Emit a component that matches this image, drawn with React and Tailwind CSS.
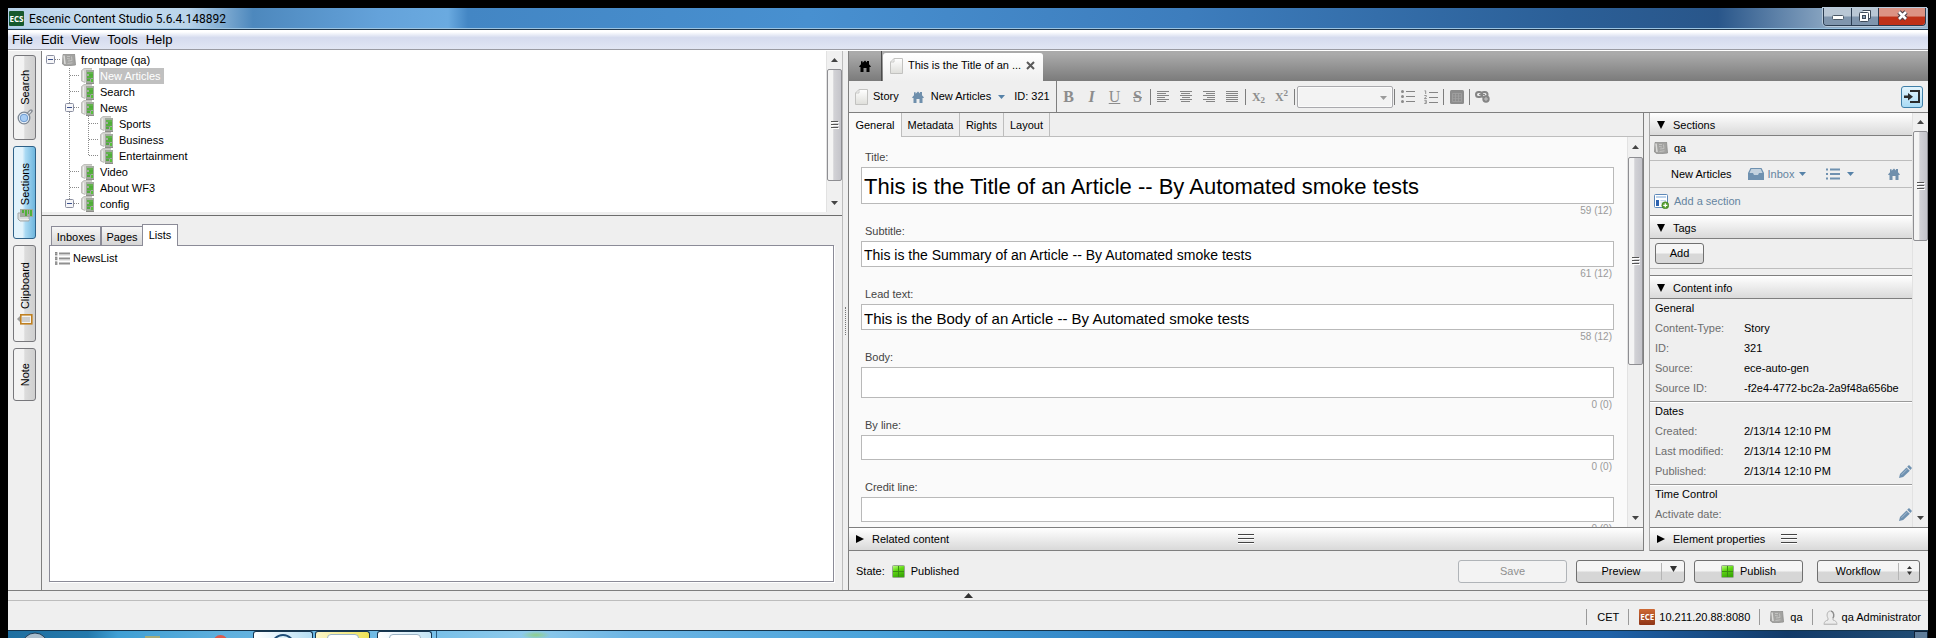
import React from "react";

/* ---------- icons ---------- */

const HomeIcon = ({ className = "", size = 12 }) => (
  <svg width={size} height={size} viewBox="0 0 12 12" className={className} aria-hidden="true">
    <path fill="currentColor" d="M6 .5 8 2.4V1h2v3.2L12 6.4 11.3 7H10.5v5H7.5V8h-3v4h-3V7H.7L0 6.4 2 4.3V1.3h1.6v1.4z" />
  </svg>
);

const DocIcon = () => (
  <svg width="13" height="16" viewBox="0 0 13 16" aria-hidden="true">
    <defs>
      <linearGradient id="doc" x1="0" y1="0" x2="0" y2="1">
        <stop offset="0" stopColor="#ffffff" />
        <stop offset="1" stopColor="#dededa" />
      </linearGradient>
    </defs>
    <path d="M4 .5h8.5v15H.5V4z" fill="url(#doc)" stroke="#c2c2c0" />
    <path d="M4 .5V4H.5" fill="none" stroke="#c9c9c7" />
  </svg>
);

const SectionIcon = () => (
  <svg width="14" height="16" viewBox="0 0 14 16" aria-hidden="true">
    <path d="M.5 2.500 3 .5h8v2h2v12H4l-3.500-1.500z" fill="#d3d3cf" />
    <path d="M.5 2.500 3 .5h8" fill="none" stroke="#b4b4b0" strokeWidth=".8" />
    <path d="M2.500 2.500v10.500" stroke="#efefed" />
    <path d="M.5 2.500v10.500L4 14.500" fill="none" stroke="#b4b4b0" strokeWidth=".8" />
    <rect x="5" y="2" width="8" height="13" fill="#a3ab9f" />
    <rect x="6" y="4" width="6" height="2" fill="#62b24c" />
    <rect x="8" y="6" width="4" height="2" fill="#4fae38" />
    <rect x="6" y="8" width="6" height="2" fill="#55b03c" />
    <rect x="6" y="11" width="3" height="2" fill="#52a93f" />
    <rect x="10" y="11" width="2" height="3" fill="#57c13b" />
    <rect x="6" y="10" width="4" height="1" fill="#7f967a" />
    <rect x="5" y="15" width="8" height="1" fill="#8d8d89" />
  </svg>
);

const PublicationIcon = () => (
  <svg width="14" height="12" viewBox="0 0 14 12" aria-hidden="true">
    <path d="M1 .5 12.500 0 13.500 11 3.500 12 .5 10z" fill="#a3a3a1" stroke="#8d8d8b" strokeWidth=".8" />
    <path d="M2 1.500l1 8.500" stroke="#dcdcda" strokeWidth="1.500" />
    <path d="M5 2.500h3M5 4.500l3 .5M6 7l4-.5M9.500 2.500l.5 4M5.500 9.500l5-.7" stroke="#c2c2c0" />
  </svg>
);

const ListIcon = () => (
  <svg width="16" height="13" viewBox="0 0 16 13" aria-hidden="true">
    <path d="M5 1.500h11M5 6.500h11M5 11.500h11" stroke="#8f8f8f" strokeWidth="2" />
    <path d="M5 3h11M5 8h11" stroke="#d0d0d0" />
    <path d="M1 0h2.500v3.500H1zM1 4.800h2.500v3.500H1zM1 9.500h2.500V13H1z" fill="#a2a2a2" />
    <path d="M2 0v3.500M2 4.800v3.500M2 9.500V13" stroke="#6f6f6f" strokeDasharray="1 1" />
  </svg>
);

const MagnifierIcon = () => (
  <svg width="16" height="16" viewBox="0 0 16 16" aria-hidden="true">
    <path d="M10 6l4-4" stroke="#8a8f96" strokeWidth="3.500" strokeLinecap="round" />
    <path d="M11 5l2.500-2.500" stroke="#dfe3e8" strokeWidth="1.200" strokeLinecap="round" />
    <circle cx="7" cy="9" r="5.800" fill="#eef4fa" stroke="#7c8794" strokeWidth="1.300" />
    <circle cx="7" cy="9" r="3.800" fill="#a9cdf3" stroke="#5f8fc8" strokeWidth=".9" />
  </svg>
);

const SideSectionsIcon = () => (
  <svg width="16" height="13" viewBox="0 0 16 13" aria-hidden="true">
    <path d="M1 4h11v8H3L1 10z" fill="#d9dcdc" stroke="#a3a8aa" />
    <rect x="3" y="0" width="13" height="8" fill="#a3ab9f" />
    <path d="M5 1v3h2V1zM8 1v6h2V1zM11 1v4h1V1zM13 1v6h2V1z" fill="#52b038" />
    <path d="M3 10.500h9" stroke="#f0f0ee" />
  </svg>
);

const ClipboardIcon = () => (
  <svg width="16" height="12" viewBox="0 0 16 12" aria-hidden="true">
    <path d="M0 6l3-3v6z" fill="#9c9c9c" />
    <rect x="3.800" y="1.800" width="11" height="9" fill="#f4f4f2" stroke="#c08020" strokeWidth="1.600" />
    <path d="M6 4v5M8 4v5M10 4v5M12 4v5" stroke="#a9a9a9" />
  </svg>
);

const PencilIcon = () => (
  <svg width="13" height="13" viewBox="0 0 13 13" aria-hidden="true">
    <path d="M0 13l1-4 6.500-6.500 3.300 3.300L4.200 12z" fill="#6f91b0" />
    <path d="M8.200 1.800 10 0l3 3-1.600 2z" fill="#6f91b0" />
    <path d="M2.500 9.800 8 4.300" stroke="#b4c7d8" strokeWidth=".8" />
  </svg>
);

const TriangleDown = () => (
  <svg width="8" height="8" viewBox="0 0 8 8" aria-hidden="true">
    <path d="M0 0h8L4 8z" fill="#000" />
  </svg>
);

const TriangleRight = () => (
  <svg width="8" height="8" viewBox="0 0 8 8" aria-hidden="true">
    <path d="M0 0v8l8-4z" fill="#000" />
  </svg>
);

const Caret = ({ className = "" }) => (
  <svg width="7" height="4" viewBox="0 0 7 4" className={className} aria-hidden="true">
    <path d="M0 0h7L3.500 4z" fill="currentColor" />
  </svg>
);

const PublishedIcon = () => (
  <svg width="13" height="13" viewBox="0 0 13 13" aria-hidden="true">
    <defs>
      <linearGradient id="pub" x1="0" y1="0" x2=".4" y2="1">
        <stop offset="0" stopColor="#c4ff8a" />
        <stop offset=".45" stopColor="#62da14" />
        <stop offset="1" stopColor="#3aa808" />
      </linearGradient>
    </defs>
    <rect x=".5" y=".5" width="12" height="12" rx="1" fill="url(#pub)" stroke="#98a593" />
    <path d="M6.500 1v11M1 6.500h11" stroke="#3a8f12" />
  </svg>
);

const PersonIcon = () => (
  <svg width="15" height="15" viewBox="0 0 15 15" aria-hidden="true">
    <path d="M1 14.500c0-3 2-4 4-4.500V8C3.500 6.500 3.500 1 7.500 1s4 5.500 2.500 7v2c2 .5 4 1.500 4 4.500z" fill="#ececec" stroke="#b5b5b5" />
    <path d="M8 1.200c3 .5 3.300 5.300 1.800 6.800" fill="none" stroke="#8c8c8c" strokeWidth="1.300" />
    <path d="M1 14h13" stroke="#c9c9c9" />
  </svg>
);

/* ---------- small shared parts ---------- */

function Scrollbar({ arrow, thumb }) {
  return (
    <div className="flex w-4 shrink-0 flex-col items-center border-l border-[#e2e2e2] bg-[#f0f0f0]">
      <div className={`flex w-full shrink-0 items-center justify-center ${arrow}`}>
        <svg width="7" height="4" viewBox="0 0 7 4"><path d="M3.500 0 7 4H0z" fill="#444" /></svg>
      </div>
      <div className={`flex w-[15px] shrink-0 items-center justify-center rounded-[2px] border border-[#8e8e92] bg-linear-to-r from-[#f4f4f4] from-35% via-[#d2d2d6] via-45% to-[#c4c4ca] ${thumb}`}>
        <svg width="8" height="8" viewBox="0 0 8 8"><path d="M0 .5h7M0 3.500h7M0 6.500h7" stroke="#555" /><path d="M1 1.500h7M1 4.500h7M1 7.500h7" stroke="#fff" /></svg>
      </div>
      <div className="flex-1" />
      <div className="flex h-[18px] w-full shrink-0 items-center justify-center">
        <svg width="7" height="4" viewBox="0 0 7 4"><path d="M0 0h7L3.500 4z" fill="#444" /></svg>
      </div>
    </div>
  );
}

const Grip = () => (
  <svg width="16" height="10" viewBox="0 0 16 10" aria-hidden="true">
    <path d="M0 1.500h16M0 5.500h16M0 9.500h16" stroke="#fff" />
    <path d="M0 .5h16M0 4.500h16M0 8.500h16" stroke="#444" />
  </svg>
);

/* ---------- window chrome ---------- */

function TitleBar() {
  return (
    <header className="flex h-[22px] shrink-0 items-start border-b border-[#21384d] bg-[linear-gradient(90deg,#b5d0e8_0,#c9def0_90px,#b9d4ea_180px,#4d88bd_245px,#64a2da_370px,#6aaae0_440px,#4386c4_460px,#4890d0_800px,#3d7dbd_1180px,#2b5f97_1560px,#29568a_1710px,#8aa6c2_1820px,#9db4c9_1920px)] shadow-[inset_0_-1px_0_#9cc4e2]">
      <span className="ml-[1px] mt-[3px] flex h-[15px] w-[15px] items-center justify-center rounded-[1px] bg-[#16592d] font-['Open_Sans',sans-serif] text-[8px] font-bold leading-none text-white">ECS</span>
      <h1 className="ml-[5px] mt-[2px] font-[Roboto,sans-serif] text-[12px] leading-[18px] text-black">Escenic Content Studio 5.6.4.148892</h1>
      <div className="ml-auto mr-[2px] flex h-[18px] overflow-hidden rounded-b-[4px] border border-t-0 border-[#2b3d52] shadow-[0_0_0_1px_#b9cbdc]">
        <button aria-label="Minimize" className="flex w-[28px] items-end justify-center border-r border-[#2b3d52] bg-linear-to-b from-[#b9c7d5] from-45% to-[#7f95ad] to-55% pb-[5px]">
          <svg width="12" height="5" viewBox="0 0 12 5"><rect x=".5" y=".5" width="11" height="4" rx="1" fill="#fff" stroke="#4c5a68" /></svg>
        </button>
        <button aria-label="Restore" className="flex w-[27px] items-center justify-center border-r border-[#2b3d52] bg-linear-to-b from-[#b9c7d5] from-45% to-[#7f95ad] to-55% pb-[2px]">
          <svg width="12" height="12" viewBox="0 0 12 12"><path d="M3.500.5h8v8h-2" fill="#fff" stroke="#3f4b5a" /><rect x=".5" y="2.500" width="9" height="9" rx="1" fill="#fff" stroke="#3f4b5a" /><rect x="3.500" y="5.500" width="3" height="3" fill="#8fa3b8" stroke="#3f4b5a" /></svg>
        </button>
        <button aria-label="Close" className="flex w-[46px] items-center justify-center bg-linear-to-b from-[#dc9384] from-45% to-[#bf3118] to-55% pb-[2px]">
          <svg width="13" height="11" viewBox="0 0 13 11"><path d="M3 2l7 7M10 2L3 9" stroke="#4a3d46" strokeWidth="4.600" /><path d="M3 2l7 7M10 2L3 9" stroke="#fff" strokeWidth="2.600" /></svg>
        </button>
      </div>
    </header>
  );
}

function MenuBar() {
  return (
    <nav className="flex h-5 shrink-0 items-center gap-2 border-b border-[#9a9ba3] bg-linear-to-b from-white from-10% via-[#d5dbee] via-40% to-[#e1e6f4] pl-1 text-[13px] leading-4 text-black">
      {["File", "Edit", "View", "Tools", "Help"].map((m) => (
        <button key={m}>{m}</button>
      ))}
    </nav>
  );
}

function SideTab({ label, icon, height, active }) {
  return (
    <button
      className={`flex w-[23px] flex-col items-center justify-center rounded-[3px] border ${height} ${
        active
          ? "border-[#2f6188] bg-linear-to-r from-[#e2f3fc] from-40% via-[#a9d9f3] via-55% to-[#6eb6dd]"
          : "border-[#77777b] bg-linear-to-r from-[#f3f3f3] from-45% via-[#dcdcdc] via-52% to-[#cfcfcf]"
      }`}
    >
      <span className="rotate-180 text-[11px] leading-4 [writing-mode:vertical-rl]">{label}</span>
      {icon && <span className="mt-1">{icon}</span>}
    </button>
  );
}

/* ---------- section tree ---------- */

const dots = { stroke: "#8a8a8a", strokeDasharray: "1 1" };

function Guide({ kind }) {
  return (
    <svg width="19" height="16" viewBox="0 0 19 16" className="shrink-0" aria-hidden="true">
      {(kind === "tee" || kind === "through" || kind === "expTee") && <path d="M8.500 0v16" {...dots} />}
      {(kind === "last" || kind === "expLast") && <path d="M8.500 0v8" {...dots} />}
      {kind !== "through" && <path d="M9 7.500h9" {...dots} />}
      {kind.startsWith("exp") && (
        <>
          <rect x="4.500" y="3.500" width="8" height="8" rx="1" fill="#f6f6f8" stroke="#8b8fa0" />
          <path d="M6 7.500h5" stroke="#3a4f8c" />
        </>
      )}
    </svg>
  );
}

const tree = [
  { label: "frontpage (qa)", guides: ["expRoot"], root: true },
  { label: "New Articles", guides: ["tee"], selected: true },
  { label: "Search", guides: ["tee"] },
  { label: "News", guides: ["expTee"] },
  { label: "Sports", guides: ["through", "tee"] },
  { label: "Business", guides: ["through", "tee"] },
  { label: "Entertainment", guides: ["through", "last"] },
  { label: "Video", guides: ["tee"] },
  { label: "About WF3", guides: ["tee"] },
  { label: "config", guides: ["expLast"] },
];

function SectionTree() {
  return (
    <div className="flex h-[161px] shrink-0 bg-white">
      <ul role="tree" className="min-w-0 flex-1 overflow-hidden pt-[1px]">
        {tree.map((n) => (
          <li key={n.label} role="treeitem" className={`flex h-4 items-center ${n.root ? "" : "pl-[19px]"}`}>
            {n.guides.map((g, i) => (
              <Guide key={i} kind={g} />
            ))}
            <span className="ml-px w-[14px] shrink-0">{n.root ? <PublicationIcon /> : <SectionIcon />}</span>
            <span className={`ml-1 px-px leading-4 ${n.selected ? "bg-[#c0c0c0] pr-[3px] text-white" : "text-black"}`}>
              {n.label}
            </span>
          </li>
        ))}
      </ul>
      <Scrollbar arrow="h-[18px]" thumb="h-[112px]" />
    </div>
  );
}

function ListsPane() {
  const tab = "flex items-center justify-center border border-[#8b8b97]";
  return (
    <section className="flex min-h-0 flex-1 flex-col border-t border-[#6d6d6d] pb-2 pl-[7px] pr-2 pt-2 text-[11px]">
      <div role="tablist" className="flex h-[21px] shrink-0 items-end pl-[2px]">
        <button role="tab" className={`${tab} h-[19px] w-[50px] border-b-0 bg-linear-to-b from-[#f7f7f7] to-[#d6d6d6] pt-[2px]`}>Inboxes</button>
        <button role="tab" className={`${tab} h-[19px] w-[41px] border-b-0 border-r-0 bg-linear-to-b from-[#f7f7f7] to-[#d6d6d6] pt-[2px]`}>Pages</button>
        <button role="tab" aria-selected="true" className={`${tab} z-10 -mb-px h-[22px] w-[36px] border-b-0 bg-white`}>Lists</button>
      </div>
      <div className="min-h-0 flex-1 border border-[#8b8b97] bg-white pl-1 pt-[5px] shadow-[1px_1px_0_#fff]">
        <div className="flex h-[14px] items-center gap-[3px]">
          <ListIcon />
          <span className="leading-4">NewsList</span>
        </div>
      </div>
    </section>
  );
}

/* ---------- editor ---------- */

const Bar = () => (
  <span className="flex w-[3px] shrink-0 justify-center">
    <span className="h-4 w-px bg-[#7d7d7d]" />
  </span>
);

const Tool = ({ label, children }) => (
  <button aria-label={label} className="flex h-6 w-[23px] shrink-0 items-center justify-center font-['Liberation_Serif',serif] text-[16px] leading-none text-[#8c8c8c]">
    {children}
  </button>
);

function AlignIcon({ kind }) {
  const widths = [12, 9, 12, 8, 12, 9];
  return (
    <svg width="13" height="12" viewBox="0 0 13 12" aria-hidden="true">
      {widths.map((w0, i) => {
        const w = kind === "justify" ? 12 : w0;
        const x = kind === "right" ? 12 - w : kind === "center" ? Math.floor((12 - w) / 2) : 0;
        return <rect key={i} x={x} y={i * 2} width={w} height="1" fill="#858585" />;
      })}
    </svg>
  );
}

function Toolbar() {
  return (
    <div className="flex h-[32px] shrink-0 items-center border-b border-[#7f7f7f] bg-[#efefef]">
      <div className="flex h-full w-[208px] shrink-0 items-center border-r border-[#7f7f7f] pl-[6px] text-[11px]">
        <DocIcon />
        <span className="ml-[5px]">Story</span>
        <button className="ml-[13px] flex items-center text-[#6f8fac]">
          <HomeIcon />
          <span className="ml-[7px] text-black">New Articles</span>
          <Caret className="ml-[7px] text-[#5682a8]" />
        </button>
        <span className="ml-[9px] whitespace-nowrap">ID: 321</span>
      </div>
      <Tool label="Bold"><b>B</b></Tool>
      <Tool label="Italic"><b className="italic">I</b></Tool>
      <Tool label="Underline"><span className="underline">U</span></Tool>
      <Tool label="Strikethrough"><b className="line-through">S</b></Tool>
      <Bar />
      <Tool label="Align left"><AlignIcon kind="left" /></Tool>
      <Tool label="Align center"><AlignIcon kind="center" /></Tool>
      <Tool label="Align right"><AlignIcon kind="right" /></Tool>
      <Tool label="Justify"><AlignIcon kind="justify" /></Tool>
      <Bar />
      <Tool label="Subscript"><b className="text-[12px] leading-none">X<sub className="text-[9px]">2</sub></b></Tool>
      <Tool label="Superscript"><b className="text-[12px] leading-none">X<sup className="text-[9px]">2</sup></b></Tool>
      <Bar />
      <span className="relative ml-px shrink-0">
        <select aria-label="Paragraph style" className="block h-[22px] w-24 appearance-none rounded-[2px] border border-[#a9a9ad] bg-[#f3f3f3] shadow-[inset_0_0_0_1px_#fafafa]" />
        <Caret className="pointer-events-none absolute right-[6px] top-[10px] text-[#9b9b9b]" />
      </span>
      <Bar />
      <Tool label="Bulleted list">
        <svg width="14" height="13" viewBox="0 0 14 13"><path d="M5 1.500h9M5 6.500h9M5 11.500h9" stroke="#858585" /><circle cx="1.500" cy="1.500" r="1.500" fill="#8a8a8a" /><circle cx="1.500" cy="6.500" r="1.500" fill="#8a8a8a" /><circle cx="1.500" cy="11.500" r="1.500" fill="#8a8a8a" /></svg>
      </Tool>
      <Tool label="Numbered list">
        <svg width="14" height="14" viewBox="0 0 14 14"><path d="M5 2.500h9M5 7.500h9M5 12.500h9" stroke="#858585" /><path d="M.5 .8h1.200V4M.3 5.500h2v1l-2 2h2.500M.3 10.300h2v3.200h-2M.8 12h1.500" stroke="#8a8a8a" fill="none" strokeWidth=".9" /></svg>
      </Tool>
      <Bar />
      <Tool label="Table">
        <svg width="14" height="14" viewBox="0 0 14 14"><rect width="14" height="14" rx="1.500" fill="#8c8c8c" /><path d="M2.500 3.500h9v8h-9zM2.500 6h9M2.500 8.700h9M5.500 3.500v8M8.500 3.500v8" fill="none" stroke="#a2a2a2" strokeWidth=".8" /></svg>
      </Tool>
      <Bar />
      <Tool label="Insert link">
        <svg width="15" height="13" viewBox="0 0 15 13"><rect x="1" y="2" width="6" height="5" rx="2.500" fill="none" stroke="#858585" strokeWidth="2" /><rect x="6.500" y="2" width="6" height="5" rx="2.500" fill="none" stroke="#858585" strokeWidth="2" /><path d="M4 4.500h6" stroke="#858585" strokeWidth="1.200" /><circle cx="11" cy="9" r="3.700" fill="#858585" /><path d="M9 9h4M11 7v4" stroke="#c4c4c4" /></svg>
      </Tool>
      <button aria-label="Toggle side panel" className="ml-auto mr-[5px] flex h-[22px] w-[22px] shrink-0 items-center justify-center rounded-[3px] border border-[#3f7fa8] bg-linear-to-b from-[#e3f4fc] to-[#a9dbf5]">
        <svg width="16" height="13" viewBox="0 0 16 13"><path d="M6 1h9v11H6" fill="none" stroke="#2b2b2b" strokeWidth="2" /><path d="M0 5.500h4V3l5 3.700-5 3.700V8H0z" fill="#2b2b2b" /></svg>
      </button>
    </div>
  );
}

const fields = [
  { id: "title", label: "Title:", value: "This is the Title of an Article -- By Automated smoke tests", count: "59 (12)", cls: "h-[37px] text-[22px]" },
  { id: "subtitle", label: "Subtitle:", value: "This is the Summary of an Article -- By Automated smoke tests", count: "61 (12)", cls: "h-[26px] text-[14px]" },
  { id: "lead", label: "Lead text:", value: "This is the Body of an Article -- By Automated smoke tests", count: "58 (12)", cls: "h-[26px] text-[15px]" },
  { id: "body", label: "Body:", value: "", count: "0 (0)", cls: "h-[31px] text-[14px]" },
  { id: "byline", label: "By line:", value: "", count: "0 (0)", cls: "h-[25px] text-[14px]" },
  { id: "credit", label: "Credit line:", value: "", count: "0 (0)", cls: "h-[25px] text-[14px]" },
];

function EditorForm() {
  const tab = "h-full border-b border-r border-[#bdbdbd]";
  return (
    <section className="flex min-w-0 flex-1 flex-col border-r border-[#7f7f7f] bg-[#fafafa]">
      <div role="tablist" className="flex h-6 shrink-0 bg-[#efefef] text-[11px] leading-4">
        <button role="tab" aria-selected="true" className="h-full w-[53px] border-r border-[#bdbdbd] bg-[#fafafa]">General</button>
        <button role="tab" className={`${tab} w-[58px]`}>Metadata</button>
        <button role="tab" className={`${tab} w-[44px]`}>Rights</button>
        <button role="tab" className={`${tab} w-[46px]`}>Layout</button>
        <span className="flex-1 border-b border-[#bdbdbd]" />
      </div>
      <div className="flex min-h-0 flex-1">
        <div className="min-w-0 flex-1 overflow-hidden pl-3 pr-[13px] pt-[7px]">
          {fields.map((f) => (
            <div key={f.id}>
              <label htmlFor={f.id} className="block h-[23px] pl-1 pt-[5px] text-[11px] leading-4 text-[#444]">{f.label}</label>
              <input id={f.id} type="text" defaultValue={f.value} className={`block w-full border border-[#b9b9b9] bg-white px-[2px] pt-[2px] text-black outline-none ${f.cls}`} />
              <div className="h-[14px] pr-[2px] text-right text-[10px] leading-[14px] text-[#999]">{f.count}</div>
            </div>
          ))}
        </div>
        <Scrollbar arrow="h-5" thumb="h-[208px]" />
      </div>
      <button className="flex h-6 shrink-0 items-center border-b border-t border-[#7f7f7f] bg-linear-to-b from-white to-[#d9d9d9] pl-[7px] text-[11px]">
        <TriangleRight />
        <span className="ml-2">Related content</span>
        <span className="flex flex-1 justify-center pr-[100px]"><Grip /></span>
      </button>
    </section>
  );
}

const PanelHeader = ({ children }) => (
  <button className="flex h-[23px] w-full items-center gap-2 border-b border-[#7f7f7f] bg-linear-to-b from-white to-[#dadada] pl-[7px] pt-px text-[11px] leading-4">
    <TriangleDown />
    {children}
  </button>
);

function InfoGroup({ title, rows, last }) {
  return (
    <div className={last ? "" : "border-b border-[#9a9a9a] pb-[3px] shadow-[0_1px_0_#fff]"}>
      <h3 className="h-[19px] pl-[5px] leading-[19px]">{title}</h3>
      <dl>
        {rows.map(([k, v, edit]) => (
          <div key={k} className="flex h-5 items-center pl-[5px]">
            <dt className="w-[89px] shrink-0 text-[#6d6d6d]">{k}</dt>
            <dd className="flex-1 whitespace-nowrap">{v}</dd>
            {edit && <button aria-label={`Edit ${k}`}><PencilIcon /></button>}
          </div>
        ))}
      </dl>
    </div>
  );
}

function Sidebar() {
  const link = "text-[#6484a0]";
  return (
    <aside className="ml-[5px] flex w-[279px] shrink-0 flex-col border-l border-[#a8a8a8] bg-[#efefef] text-[11px]">
      <div className="flex min-h-0 flex-1">
        <div className="min-w-0 flex-1 overflow-hidden">
          <PanelHeader>Sections</PanelHeader>
          <div className="flex h-[25px] items-center gap-[6px] border-b border-[#bdbdbd] pl-1"><PublicationIcon />qa</div>
          <div className={`flex h-[27px] items-center border-b border-[#bdbdbd] pl-[21px] ${link}`}>
            <span className="text-black">New Articles</span>
            <button className="ml-4 flex items-center">
              <svg width="16" height="12" viewBox="0 0 16 12"><path d="M2.500 0h11L16 5v7H0V5z" fill="#6f91b0" /><path d="M3.300 1h9.400L14.500 5H11l-1 2H6L5 5H1.500z" fill="#c3d2df" /></svg>
              <span className="ml-1">Inbox</span>
              <Caret className="ml-[5px] text-[#5682a8]" />
            </button>
            <button aria-label="Lists" className="ml-[20px] flex items-center">
              <svg width="14" height="12" viewBox="0 0 14 12"><path d="M4 1.500h10M4 6h10M4 10.500h10" stroke="#6f91b0" strokeWidth="2" /><path d="M0 1.500h2M0 6h2M0 10.500h2" stroke="#6f91b0" strokeWidth="2" /></svg>
              <Caret className="ml-[7px] text-[#5682a8]" />
            </button>
            <button aria-label="Home section" className="ml-auto mr-[12px] text-[#6f8fac]"><HomeIcon /></button>
          </div>
          <button className={`flex h-[28px] w-full items-center border-b border-[#7f7f7f] pl-1 ${link}`}>
            <svg width="15" height="15" viewBox="0 0 15 15"><rect x=".5" y=".5" width="13" height="13" rx="1" fill="#fff" stroke="#5d88b8" /><path d="M2 2h10v2H2z" fill="#bcd3ec" /><path d="M2 6h3v6H2z" fill="#2c62b0" /><path d="M6.500 6h5.500v1.200H6.500zM6.500 8.500h3v1h-3z" fill="#c0d4ea" /><circle cx="11.300" cy="11.300" r="3.500" fill="#56a032" stroke="#3c7a22" strokeWidth=".6" /><path d="M9.300 11.300h4M11.300 9.300v4" stroke="#fff" strokeWidth="1.200" /></svg>
            <span className="ml-[5px]">Add a section</span>
          </button>
          <PanelHeader>Tags</PanelHeader>
          <div className="flex h-[30px] items-center border-b border-[#bdbdbd] pl-[5px]">
            <button className="h-[21px] w-[49px] rounded-[3px] border border-[#707070] bg-linear-to-b from-[#f6f6f6] from-45% to-[#d8d8d8] to-55%">Add</button>
          </div>
          <div className="h-[7px] border-b border-[#7f7f7f]" />
          <PanelHeader>Content info</PanelHeader>
          <InfoGroup title="General" rows={[["Content-Type:", "Story"], ["ID:", "321"], ["Source:", "ece-auto-gen"], ["Source ID:", "-f2e4-4772-bc2a-2a9f48a656be"]]} />
          <InfoGroup title="Dates" rows={[["Created:", "2/13/14 12:10 PM"], ["Last modified:", "2/13/14 12:10 PM"], ["Published:", "2/13/14 12:10 PM", true]]} />
          <InfoGroup title="Time Control" rows={[["Activate date:", "", true]]} last />
        </div>
        <Scrollbar arrow="h-[18px]" thumb="h-[110px]" />
      </div>
      <button className="flex h-6 shrink-0 items-center border-b border-t border-[#7f7f7f] bg-linear-to-b from-white to-[#d9d9d9] pl-[7px]">
        <TriangleRight />
        <span className="ml-2">Element properties</span>
        <span className="ml-4"><Grip /></span>
      </button>
    </aside>
  );
}

function StateBar() {
  const btn = "flex h-[23px] items-center justify-center rounded-[3px] border border-[#707070] bg-linear-to-b from-[#f5f5f5] from-45% to-[#d6d6d6] to-55%";
  return (
    <footer className="flex h-[39px] shrink-0 items-center bg-[#efefef] pl-[7px] pr-2 pt-px text-[11px]">
      <span>State:</span>
      <span className="ml-[7px]"><PublishedIcon /></span>
      <span className="ml-[6px]">Published</span>
      <div className="ml-auto flex gap-[9px]">
        <button disabled className="h-[23px] w-[109px] rounded-[3px] border border-[#b0b4b8] bg-[#f3f3f3] text-[#8f8f8f]">Save</button>
        <button className={`${btn} w-[109px]`}>
          <span className="flex-1 pl-1">Preview</span>
          <span className="flex h-[17px] w-[23px] items-center justify-center border-l border-[#b5b5b5] pb-1">
            <svg width="7" height="6" viewBox="0 0 7 6"><path d="M0 0h7L3.500 6z" fill="#333" /></svg>
          </span>
        </button>
        <button className={`${btn} mr-[5px] w-[109px] gap-[6px]`}><PublishedIcon />Publish</button>
        <button className={`${btn} w-[103px]`}>
          <span className="flex-1">Workflow</span>
          <span className="flex h-[17px] w-[21px] items-center justify-center border-l border-[#b5b5b5] pb-px">
            <svg width="5" height="9" viewBox="0 0 5 9"><path d="M2.500 0 5 3H0zM0 5.500h5L2.500 9z" fill="#333" /></svg>
          </span>
        </button>
      </div>
    </footer>
  );
}

function Editor() {
  return (
    <main className="flex min-w-0 flex-1 flex-col border-l border-[#7f7f7f]">
      <div className="flex h-[30px] shrink-0 items-end bg-linear-to-b from-[#aaaaaa] from-10% to-[#7b7b7b]">
        <button aria-label="Home" className="flex h-full w-[33px] items-center justify-center border-r border-[#4a4a4a] text-black"><HomeIcon /></button>
        <div className="ml-px flex h-7 w-[160px] items-center rounded-t-[3px] bg-linear-to-b from-white to-[#efefef] pb-[3px] pl-[7px] text-[11px]">
          <DocIcon />
          <span className="ml-[5px] whitespace-nowrap">This is the Title of an ...</span>
          <button aria-label="Close tab" className="ml-auto mr-2">
            <svg width="9" height="9" viewBox="0 0 9 9"><path d="M1 1l7 7M8 1L1 8" stroke="#5a5a5a" strokeWidth="2" /></svg>
          </button>
        </div>
      </div>
      <Toolbar />
      <div className="flex min-h-0 flex-1 bg-[#efefef]">
        <EditorForm />
        <Sidebar />
      </div>
      <StateBar />
    </main>
  );
}

/* ---------- bottom bars ---------- */

function StatusBar() {
  const item = "flex h-4 items-center border-l border-[#9a9a9a] pl-[10px] text-[11px]";
  return (
    <>
      <div className="flex h-[11px] shrink-0 items-center justify-center border-b border-t border-b-[#bdbdbd] border-t-[#7f7f7f]">
        <svg width="9" height="5" viewBox="0 0 9 5"><path d="M4.500 0 9 5H0z" fill="#333" /></svg>
      </div>
      <div className="flex h-[29px] shrink-0 items-center justify-end pr-[7px] pt-[3px]">
        <span className={`${item} pr-[9px]`}>CET</span>
        <span className={`${item} pr-[9px]`}>
          <span className="mr-1 flex h-4 w-4 items-center justify-center rounded-[1px] bg-linear-to-b from-[#cf6a35] to-[#8f3416] font-['Open_Sans',sans-serif] text-[8px] font-bold leading-none text-white">ECE</span>
          10.211.20.88:8080
        </span>
        <span className={`${item} gap-[6px] pr-[9px]`}><PublicationIcon />qa</span>
        <span className={`${item} gap-1`}><PersonIcon />qa Administrator</span>
      </div>
    </>
  );
}

function Taskbar() {
  const task = "flex justify-center overflow-hidden rounded-t-[3px] border border-b-0 border-[#173650]";
  return (
    <div className="flex h-2 shrink-0 overflow-hidden border-t border-[#14344c] bg-[linear-gradient(90deg,#1f6fa0_0,#2479ac_80px,#3f9fd4_110px,#5fb0de_220px,#79c0e8_430px,#8fcbec_520px,#6db5e4_620px,#4aa3da_860px,#2a7cc0_1180px,#1f62a8_1600px,#123a68_1780px,#1f4a72_1900px)]">
      <svg width="28" height="8" viewBox="0 0 28 8" className="ml-[13px]"><circle cx="14" cy="15" r="13" fill="#a9bccb" stroke="#1d3c57" /></svg>
      <span className="ml-[96px] mt-[5px] h-2 w-[15px] bg-[#a5ab7a]" />
      <span className="ml-[53px] mt-1 h-2 w-[15px] rounded-t-full bg-[#dd5a4c]" />
      <span className={`${task} ml-[25px] w-[60px] bg-linear-to-r from-white to-[#b5ddf2]`}>
        <svg width="24" height="8" viewBox="0 0 24 8"><circle cx="12" cy="14" r="11" fill="#dff3fb" stroke="#1f4d78" strokeWidth="2" /></svg>
      </span>
      <span className={`${task} ml-[2px] w-[55px] bg-linear-to-r from-[#fbf5c8] to-[#efe352]`}>
        <span className="mt-[2px] h-4 w-8 rounded-[4px] border border-[#9db4c6] bg-white" />
      </span>
      <span className={`${task} ml-[7px] w-[55px] bg-linear-to-r from-white to-[#c3e4f5]`}>
        <span className="mt-[2px] h-4 w-8 rounded-[4px] border border-[#9db4c6] bg-white" />
      </span>
      <span className="ml-1 h-2 w-px bg-[#2d5f83]" />
      <span className="ml-[84px] h-2 w-[30px] bg-radial from-[#8fd08a] to-transparent to-70%" />
      <span className="ml-auto h-2 w-[14px] border border-[#0d2138] bg-[#5f7d9a]" />
    </div>
  );
}

export default function App() {
  return (
    <div className="flex h-screen flex-col overflow-hidden bg-black px-2 pt-2 font-['Liberation_Sans',Arial,sans-serif] text-[11px] text-black">
      <TitleBar />
      <MenuBar />
      <div className="flex min-h-0 flex-1 flex-col bg-[#efefef]">
        <div className="flex min-h-0 flex-1 border-t border-white">
          <div className="flex w-[34px] shrink-0 flex-col gap-[6px] border-r border-[#7f7f7f] pl-[5px] pt-1">
            <SideTab label="Search" height="h-[85px]" icon={<MagnifierIcon />} />
            <SideTab label="Sections" height="h-[93px]" icon={<SideSectionsIcon />} active />
            <SideTab label="Clipboard" height="h-[97px]" icon={<ClipboardIcon />} />
            <SideTab label="Note" height="h-[53px]" />
          </div>
          <div className="flex min-w-0 shrink basis-[801px] flex-col gap-[3px] border-r border-[#bdbdbd]">
            <SectionTree />
            <ListsPane />
          </div>
          <div className="flex w-[5px] shrink-0 items-center justify-center">
            <span className="h-7 border-l border-dotted border-[#777]" />
          </div>
          <Editor />
        </div>
        <StatusBar />
      </div>
      <Taskbar />
    </div>
  );
}
